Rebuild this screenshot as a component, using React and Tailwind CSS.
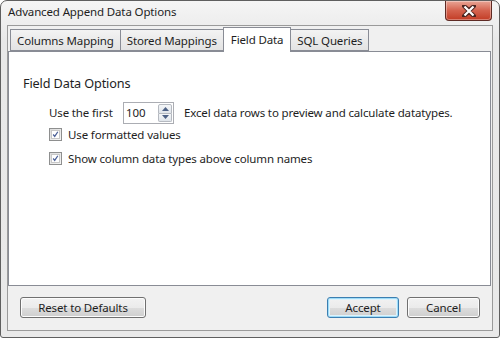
import { useState } from "react";

const font = "font-['Segoe_UI','Noto_Sans',sans-serif]";

function CloseButton() {
  return (
    <div className="absolute right-[7px] top-0 w-[47px] h-[20px] rounded-b-[4px] border border-t-0 border-[#5e2a24] bg-gradient-to-b from-[#e8a596] via-[#d4624e] to-[#c23b24] flex items-center justify-center shadow-[inset_0_0_0_1px_rgba(255,255,255,0.35)]">
      <svg width="14" height="12" viewBox="0 0 14 12">
        <path
          d="M2 1 L7 5 L12 1 M2 11 L7 7 L12 11 M2 1 L12 11 M12 1 L2 11"
          stroke="#4a2420"
          strokeWidth="4"
          strokeLinecap="round"
          fill="none"
        />
        <path d="M2.5 1.5 L11.5 10.5 M11.5 1.5 L2.5 10.5" stroke="#fff" strokeWidth="2.2" fill="none" />
      </svg>
    </div>
  );
}

function Tab({ label, active }) {
  if (active) {
    return (
      <div className="h-[25px] -mb-px -ml-px px-[7px] pt-[3px] bg-white border border-b-0 border-[#898c95] relative z-10">
        {label}
      </div>
    );
  }
  return (
    <div className="h-[22px] mt-[2px] px-[6px] pt-[2px] bg-gradient-to-b from-[#f3f3f3] to-[#e3e3e3] border border-[#898c95] -ml-px first:ml-0">
      {label}
    </div>
  );
}

function Checkbox({ label }) {
  const [on, setOn] = useState(true);
  return (
    <label className="flex items-center gap-[6px] cursor-default" onClick={() => setOn(!on)}>
      <span className="w-[13px] h-[13px] border border-[#8e8f8f] bg-gradient-to-br from-[#dcdcdc] to-[#f6f6f6] flex items-center justify-center">
        <span className="w-[9px] h-[9px] border border-[#c8c8c8] bg-white flex items-center justify-center">
          {on && (
            <svg width="9" height="9" viewBox="0 0 9 9">
              <path d="M1.5 4.5 L3.5 7 L7.5 1" stroke="#4a5f97" strokeWidth="1.6" fill="none" />
            </svg>
          )}
        </span>
      </span>
      <span>{label}</span>
    </label>
  );
}

function Spinner() {
  return (
    <div className="w-[51px] h-[22px] border border-[#abadb3] bg-white flex items-stretch">
      <span className="flex-1 pl-[2px] leading-[20px]">100</span>
      <div className="w-[15px] flex flex-col py-[1px] pr-[1px]">
        <div className="flex-1 border border-[#b5b9c0] bg-gradient-to-b from-[#f4f6f8] to-[#dfe4ea] rounded-t-[2px] flex items-center justify-center">
          <svg width="7" height="4" viewBox="0 0 7 4"><path d="M0 4 L3.5 0 L7 4 Z" fill="#4d6185" /></svg>
        </div>
        <div className="flex-1 border border-t-0 border-[#b5b9c0] bg-gradient-to-b from-[#f4f6f8] to-[#dfe4ea] rounded-b-[2px] flex items-center justify-center">
          <svg width="7" height="4" viewBox="0 0 7 4"><path d="M0 0 L3.5 4 L7 0 Z" fill="#4d6185" /></svg>
        </div>
      </div>
    </div>
  );
}

function Button({ children, className = "", primary }) {
  return (
    <button
      className={`h-[21px] rounded-[3px] border flex items-center justify-center bg-[linear-gradient(#f2f2f2_0%,#ebebeb_50%,#dddddd_51%,#cfcfcf_100%)] ${
        primary
          ? "border-[#3c7fb1] shadow-[inset_0_0_0_1px_#9fdcf8,inset_0_0_0_2px_#def3fc]"
          : "border-[#707070] shadow-[inset_0_0_0_1px_#fcfcfc]"
      } ${className}`}
    >
      {children}
    </button>
  );
}

export default function App() {
  return (
    <div className={`w-[500px] h-[338px] ${font} text-[11.5px] tracking-[-0.14px] text-[#1e1e1e]`}>
      <div className="w-full h-full rounded-t-[7px] rounded-b-[3px] border border-[#5f5f5f] bg-[linear-gradient(#f5f5f5,#e8e8e8_40px,#e9e9e9)] flex flex-col relative">
        <div className="h-[24px] flex items-center pl-[7px] pb-[2px]">
          Advanced Append Data Options
        </div>
        <CloseButton />
        <div className="flex-1 mx-[6px] mb-[6px] border border-[#9a9a9a] bg-[#f0f0f0] flex flex-col">
          <div className="flex pl-[2px] pt-[1px] items-end">
            <Tab label="Columns Mapping" />
            <Tab label="Stored Mappings" />
            <Tab label="Field Data" active />
            <Tab label="SQL Queries" />
          </div>
          <div className="h-[235px] mr-[1px] bg-white border border-[#898c95] pl-[14px] pt-[22px]">
            <div className="text-[12.7px] leading-[18px]">Field Data Options</div>
            <div className="pl-[26px] pt-[10px] flex flex-col">
              <div className="flex items-center">
                <span className="w-[74px]">Use the first</span>
                <Spinner />
                <span className="ml-[10px]">Excel data rows to preview and calculate datatypes.</span>
              </div>
              <div className="flex flex-col gap-[7px] mt-[2px]">
                <Checkbox label="Use formatted values" />
                <Checkbox label="Show column data types above column names" />
              </div>
            </div>
          </div>
          <div className="flex-1 flex items-center px-[12px] pb-[1px]">
            <Button className="w-[126px]">Reset to Defaults</Button>
            <div className="flex-1" />
            <Button primary className="w-[72px]">Accept</Button>
            <Button className="w-[73px] ml-[8px]">Cancel</Button>
          </div>
        </div>
      </div>
    </div>
  );
}
